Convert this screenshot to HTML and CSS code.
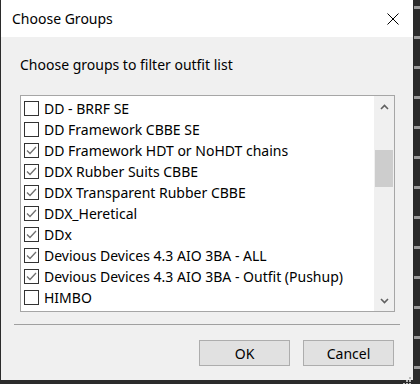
FILE: index.html
```html
<!DOCTYPE html>
<html lang="en">
<head>
  <meta charset="UTF-8">
  <title>Choose Groups</title>
  <link rel="stylesheet" href="styles.css">
</head>
<body>
<div class="screen">
  <div class="dialog">
    <div class="titlebar">
      <span class="title">Choose Groups</span>
      <svg class="close" width="12" height="12" viewBox="0 0 12 12"><path d="M0.5 0.5 L11.5 11.5 M11.5 0.5 L0.5 11.5" stroke="#000" stroke-width="1"/></svg>
    </div>
    <div class="content">
      <div class="prompt">Choose groups to filter outfit list</div>
      <div class="listbox">
        <ul class="items">
          <li><span class="box"></span>DD - BRRF SE</li>
          <li><span class="box"></span>DD Framework CBBE SE</li>
          <li><span class="box checked"></span>DD Framework HDT or NoHDT chains</li>
          <li><span class="box checked"></span>DDX Rubber Suits CBBE</li>
          <li><span class="box checked"></span>DDX Transparent Rubber CBBE</li>
          <li><span class="box checked"></span>DDX_Heretical</li>
          <li><span class="box checked"></span>DDx</li>
          <li><span class="box checked"></span>Devious Devices 4.3 AIO 3BA - ALL</li>
          <li><span class="box checked"></span>Devious Devices 4.3 AIO 3BA - Outfit (Pushup)</li>
          <li><span class="box"></span>HIMBO</li>
        </ul>
        <div class="scrollbar">
          <div class="arrow">
            <svg width="9" height="6" viewBox="0 0 9 6"><path d="M1 5 L4.5 1.5 L8 5" fill="none" stroke="#606060" stroke-width="1.6"/></svg>
          </div>
          <div class="track"><div class="thumb"></div></div>
          <div class="arrow">
            <svg width="9" height="6" viewBox="0 0 9 6"><path d="M1 1 L4.5 4.5 L8 1" fill="none" stroke="#606060" stroke-width="1.6"/></svg>
          </div>
        </div>
      </div>
      <div class="separator"></div>
      <div class="buttons">
        <button type="button">OK</button>
        <button type="button">Cancel</button>
      </div>
      <div class="grip">
        <svg width="8" height="8" viewBox="0 0 8 8" fill="#b8b8b8">
          <rect x="6" y="0" width="2" height="2"/>
          <rect x="3" y="3" width="2" height="2"/><rect x="6" y="3" width="2" height="2"/>
          <rect x="0" y="6" width="2" height="2"/><rect x="3" y="6" width="2" height="2"/><rect x="6" y="6" width="2" height="2"/>
        </svg>
      </div>
    </div>
  </div>
  <div class="edge"></div>
</div>
</body>
</html>
```

FILE: styles.css
```css
body {
  margin: 0;
  background-color: #2b2b2b;
  font-family: "Noto Sans", "Open Sans", sans-serif;
  font-size: 14px;
  color: #000;
}
.screen {
  display: flex;
  width: 420px;
  height: 384px;
  padding-left: 1px;
  box-sizing: border-box;
}
.dialog {
  width: 413px;
  height: 380px;
  background: #f0f0f0;
  display: flex;
  flex-direction: column;
}
.titlebar {
  height: 37px;
  background: #fff;
  display: flex;
  align-items: center;
  justify-content: space-between;
  padding: 0 14px 0 11px;
}
.title {
  font-size: 14px;
}
.content {
  position: relative;
  flex: 1;
  padding: 0 0 0 19px;
}
.prompt {
  margin-top: 19px;
  height: 20px;
  line-height: 18px;
}
.listbox {
  margin-top: 19px;
  width: 375px;
  height: 217px;
  box-sizing: border-box;
  border: 1px solid #a6a6a6;
  background: #fff;
  display: flex;
}
.items {
  list-style: none;
  margin: 0;
  padding: 2px 0 0 3px;
  flex: 1;
}
.items li {
  height: 21px;
  display: flex;
  align-items: center;
  white-space: nowrap;
}
.box {
  width: 15px;
  height: 15px;
  box-sizing: border-box;
  border: 1px solid #333;
  background: #fff;
  margin-right: 5px;
  flex-shrink: 0;
}
.box.checked {
  background: #fff url("data:image/svg+xml,%3Csvg xmlns='http://www.w3.org/2000/svg' width='13' height='13' viewBox='0 0 13 13'%3E%3Cpath d='M2 6.5 L5 9.5 L11 3' fill='none' stroke='%23707070' stroke-width='1.3'/%3E%3C/svg%3E") no-repeat center;
}
.scrollbar {
  width: 20px;
  background: #f0f0f0;
  display: flex;
  flex-direction: column;
}
.arrow {
  height: 21px;
  display: flex;
  align-items: center;
  justify-content: center;
}
.track {
  flex: 1;
  padding-top: 33px;
}
.thumb {
  height: 37px;
  margin: 0 1px;
  background: #cdcdcd;
}
.separator {
  margin: 12px 13px 0 -6px;
  height: 1px;
  background: #a0a0a0;
}
.buttons {
  display: flex;
  justify-content: flex-end;
  gap: 13px;
  margin-top: 15px;
  padding-right: 19px;
}
button {
  width: 91px;
  height: 26px;
  background: #e1e1e1;
  border: 1px solid #adadad;
  font-family: inherit;
  font-size: 14px;
  color: #000;
  padding: 0;
}
.grip {
  position: absolute;
  right: 2px;
  bottom: 2px;
  height: 8px;
}
.edge {
  width: 6px;
  height: 384px;
  background: repeating-linear-gradient(to bottom, #2b2b2b 0, #2b2b2b 6px, #9a9a9a 6px, #9a9a9a 9px, #2b2b2b 9px, #2b2b2b 30px);
  margin-left: 1px;
}
```
